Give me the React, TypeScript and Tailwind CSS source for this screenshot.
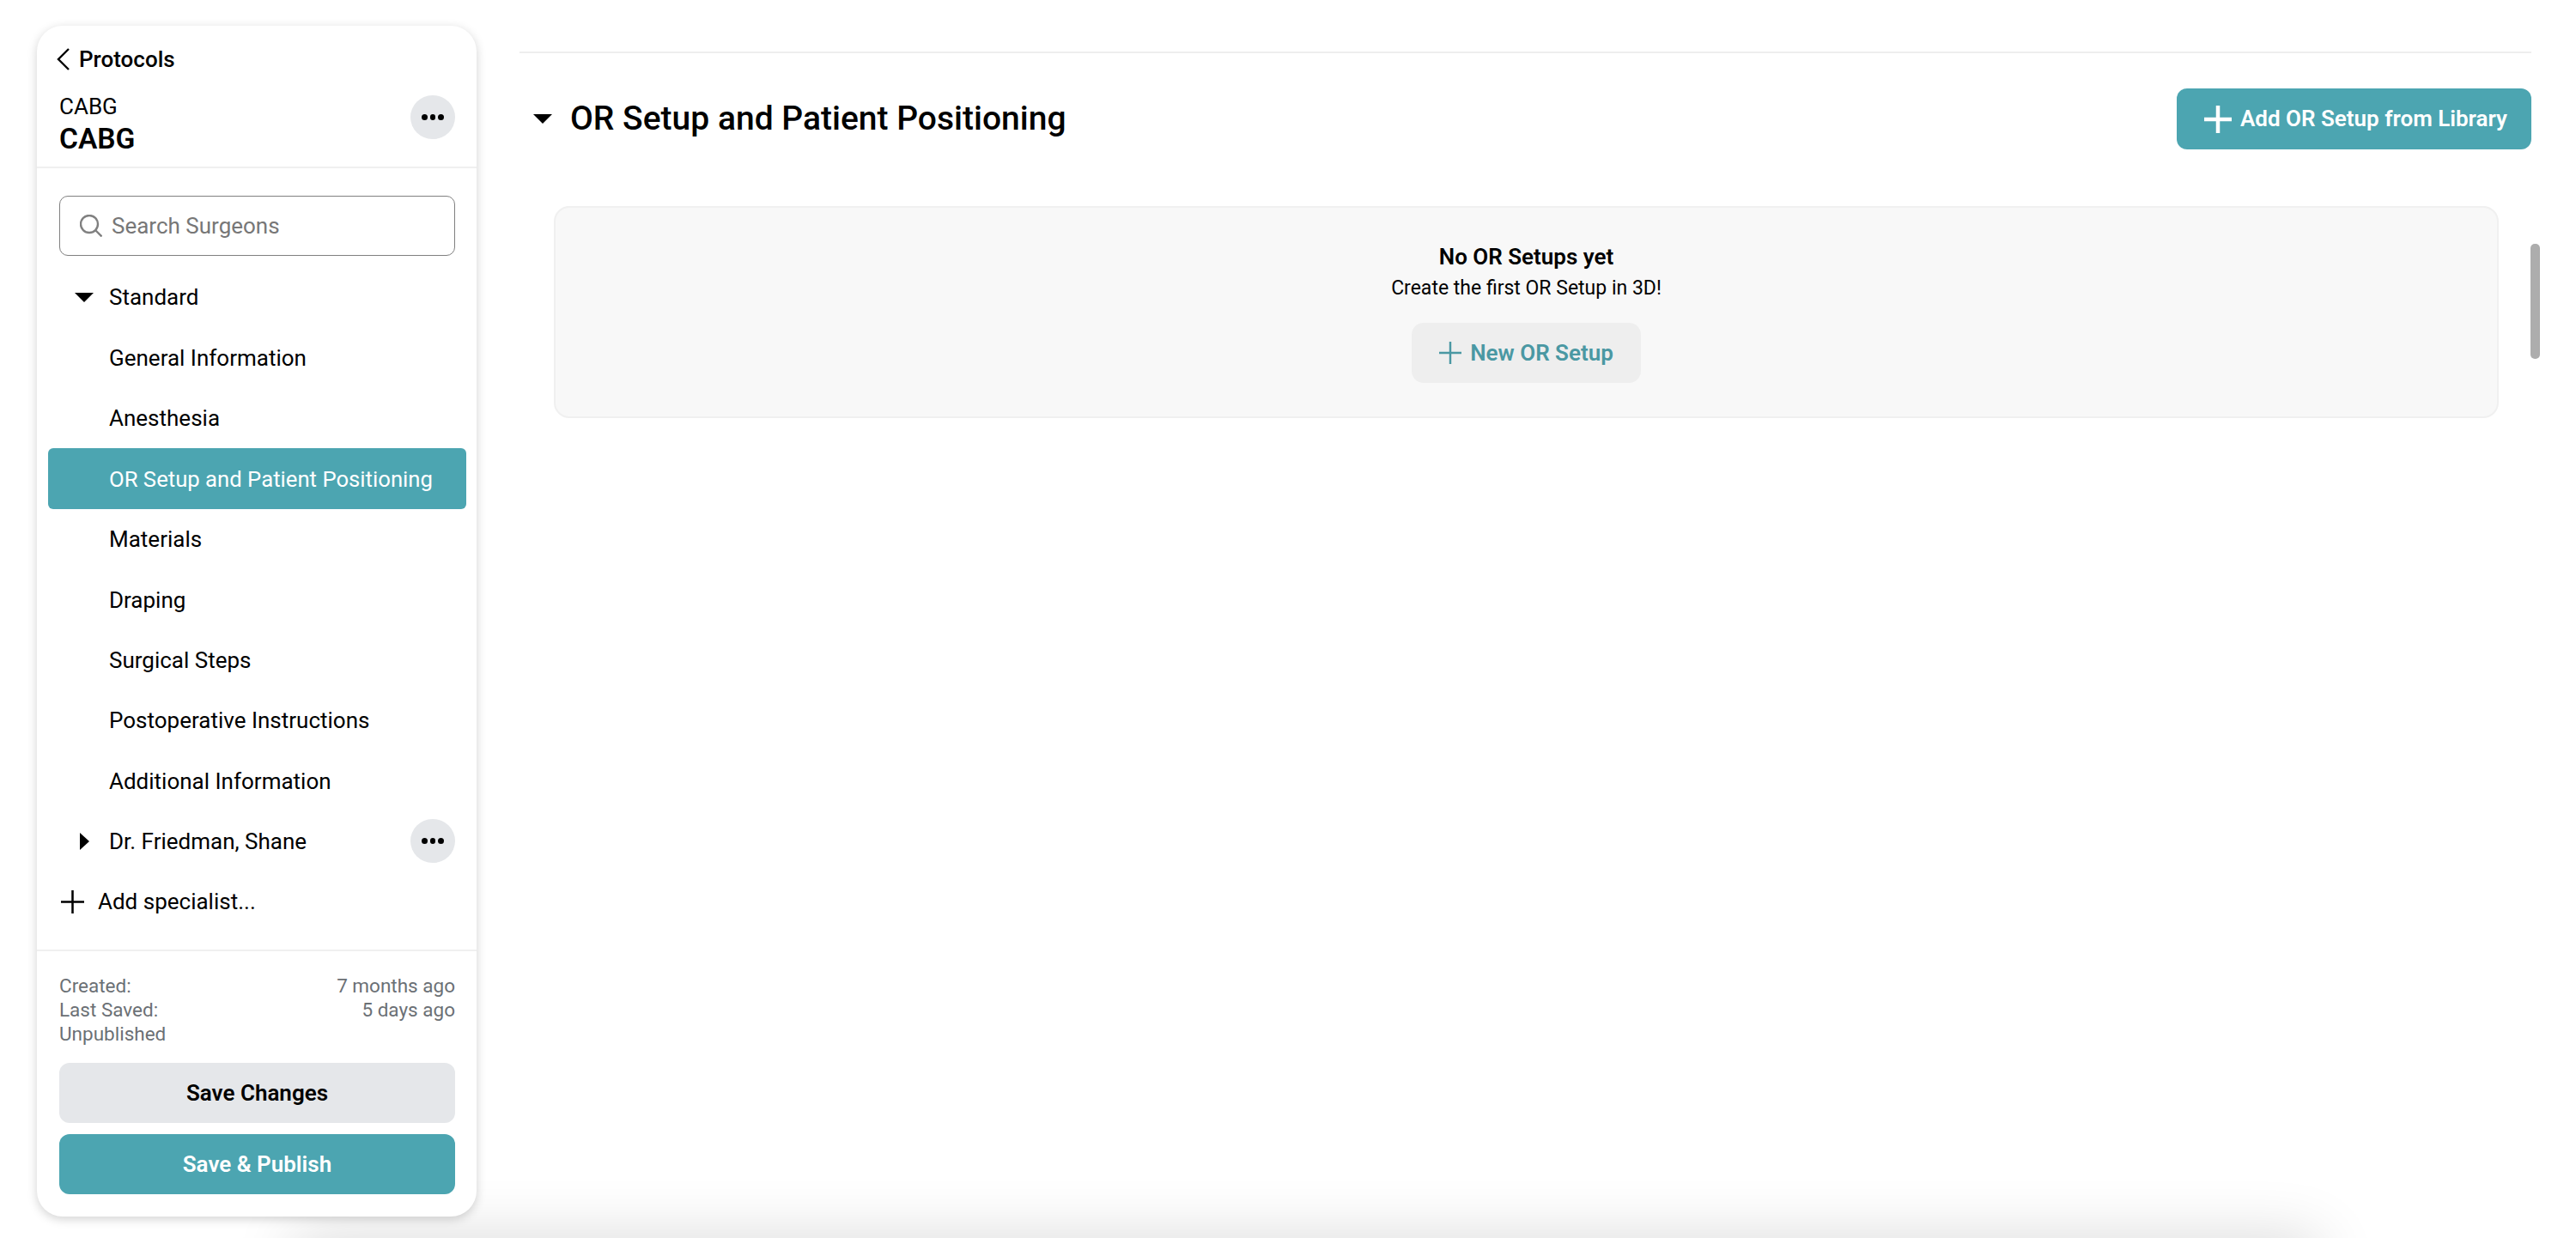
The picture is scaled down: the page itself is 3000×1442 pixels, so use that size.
const sections = [
    "General Information",
    "Anesthesia",
    "OR Setup and Patient Positioning",
    "Materials",
    "Draping",
    "Surgical Steps",
    "Postoperative Instructions",
    "Additional Information",
];

function PlusIcon({ className, strokeWidth }: { className: string; strokeWidth: number }) {
    return (
        <svg viewBox="0 0 32 32" className={className} fill="none" stroke="currentColor" strokeWidth={strokeWidth}>
            <path d="M16 0V32M0 16H32" />
        </svg>
    );
}

function CaretDown({ className }: { className: string }) {
    return (
        <svg viewBox="0 0 22 11" className={className} fill="currentColor">
            <path d="M0 0H22L11 11Z" />
        </svg>
    );
}

function MoreButton() {
    return (
        <button className="w-[52px] h-[51px] rounded-full bg-[#e5e7ea] flex items-center justify-center gap-[3px]">
            <span className="w-[6.5px] h-[6.5px] rounded-full bg-black" />
            <span className="w-[6.5px] h-[6.5px] rounded-full bg-black" />
            <span className="w-[6.5px] h-[6.5px] rounded-full bg-black" />
        </button>
    );
}

function Sidebar() {
    return (
        <aside className="relative z-10 w-[512px] h-[1387px] mt-[30px] ml-[43px] shrink-0 flex flex-col bg-white rounded-[30px] shadow-[0_3px_12px_rgba(0,0,0,0.18)]">
            <div className="h-[166px] border-b-2 border-[#f0f0f0] pl-[26px] pr-[25px] pt-[22px]">
                <div className="flex items-center h-[34px] text-[26px] font-medium">
                    <svg viewBox="0 0 15 26" className="w-[15px] h-[26px] mr-[11px] ml-[-3px]" fill="none" stroke="currentColor" strokeWidth="2.4">
                        <path d="M14 1L2 13L14 25" />
                    </svg>
                    Protocols
                </div>
                <div className="flex justify-between mt-[18px]">
                    <div>
                        <div className="text-[26px] leading-[36px] pt-[2px]">CABG</div>
                        <div className="text-[33.5px] leading-[40px] font-semibold">CABG</div>
                    </div>
                    <div className="mt-[7px]">
                        <MoreButton />
                    </div>
                </div>
            </div>

            <div className="flex-1 flex flex-col pl-[26px] pr-[25px] pt-[32px]">
                <div className="flex items-center h-[70px] border border-[#808080] rounded-[10px] pl-[23px]">
                    <svg viewBox="0 0 26 26" className="w-[26px] h-[26px] mr-[11px]" fill="none" stroke="#808080" strokeWidth="2.4">
                        <circle cx="11" cy="11" r="10" />
                        <path d="M18 18L25.5 25.5" />
                    </svg>
                    <span className="text-[26px] text-[#777]">Search Surgeons</span>
                </div>
                <div className="flex items-center h-[70.4px] mt-[13px] pl-[18px]">
                    <CaretDown className="w-[22px] h-[11px] mr-[18px]" />
                    <span className="text-[26px] pt-[1px]">Standard</span>
                </div>
                {sections.map((name) =>
                    name === "OR Setup and Patient Positioning" ? (
                        <div
                            key={name}
                            className="flex items-center h-[70.4px] -mx-[13px] pt-[2px] pl-[71px] bg-[#4ca5b1] text-white rounded-[6px] text-[25.7px]"
                        >
                            {name}
                        </div>
                    ) : (
                        <div key={name} className="flex items-center h-[70.4px] pt-[2px] pl-[58px] text-[26px]">
                            {name}
                        </div>
                    )
                )}
                <div className="flex items-center justify-between h-[70.4px] pl-[24px]">
                    <div className="flex items-center">
                        <svg viewBox="0 0 11 20" className="w-[11px] h-[20px] mr-[23px]" fill="currentColor">
                            <path d="M0 0L11 10L0 20Z" />
                        </svg>
                        <span className="text-[26px] pt-[1px]">Dr. Friedman, Shane</span>
                    </div>
                    <MoreButton />
                </div>
                <div className="flex items-center h-[70.4px] pl-[2px]">
                    <PlusIcon className="w-[27px] h-[27px] mr-[16px]" strokeWidth={3} />
                    <span className="text-[26px]">Add specialist...</span>
                </div>
            </div>

            <div className="border-t-2 border-[#f0f0f0] pl-[26px] pr-[25px] pt-[26px] pb-[26px]">
                <div className="flex justify-between text-[22.5px] leading-[28px] text-[#6b7075]">
                    <div>
                        <div>Created:</div>
                        <div>Last Saved:</div>
                        <div>Unpublished</div>
                    </div>
                    <div className="text-right">
                        <div>7 months ago</div>
                        <div>5 days ago</div>
                    </div>
                </div>
                <button className="w-full h-[70px] mt-[20px] rounded-[12px] bg-[#e5e7ea] text-[26px] font-semibold">
                    Save Changes
                </button>
                <button className="w-full h-[70px] mt-[13px] rounded-[12px] bg-[#4ca5b1] text-white text-[26px] font-semibold">
                    Save &amp; Publish
                </button>
            </div>
        </aside>
    );
}

export default function App() {
    return (
        <main
            className="relative flex w-[3000px] h-[1442px] overflow-hidden bg-white text-black"
            style={{ fontFamily: "Roboto, sans-serif" }}
        >
            <Sidebar />

            <div className="w-[2343px] ml-[50px] shrink-0 pt-[60px]">
                <div className="border-t-2 border-[#eeeeee]" />
                <div className="flex items-center justify-between mt-[41px] h-[71px]">
                    <div className="flex items-center pl-[16px]">
                        <CaretDown className="w-[22px] h-[11px] mr-[21px]" />
                        <h1 className="text-[39px] font-medium">OR Setup and Patient Positioning</h1>
                    </div>
                    <button className="flex items-center h-[71px] w-[413px] pl-[32px] rounded-[12px] bg-[#4ca5b1] text-white text-[26px] font-semibold">
                        <PlusIcon className="w-[32px] h-[32px] mr-[10px]" strokeWidth={4.5} />
                        Add OR Setup from Library
                    </button>
                </div>
                <div className="flex flex-col items-center h-[247px] w-[2265px] mt-[66px] ml-[40px] bg-[#f8f8f8] border-2 border-[#f0f0f0] rounded-[18px] pt-[40px]">
                    <div className="text-[26px] leading-[34px] font-semibold">No OR Setups yet</div>
                    <div className="text-[23px] leading-[34px] mt-[3px]">Create the first OR Setup in 3D!</div>
                    <button className="flex items-center justify-center h-[70px] w-[267px] mt-[23px] rounded-[14px] bg-[#eeeeee] text-[#4a98a3] text-[26px] font-semibold">
                        <PlusIcon className="w-[26px] h-[26px] mr-[10px]" strokeWidth={3} />
                        New OR Setup
                    </button>
                </div>
            </div>

            {/* scrollbar thumb */}
            <div className="absolute left-[2947px] top-[284px] w-[11px] h-[134px] rounded-[5px] bg-[#adadad]" />
            {/* shadow of the bar just under the fold */}
            <div className="absolute left-[340px] top-[1442px] w-[2360px] h-[60px] shadow-[0_0_70px_rgba(0,0,0,0.16)]" />
        </main>
    );
}
